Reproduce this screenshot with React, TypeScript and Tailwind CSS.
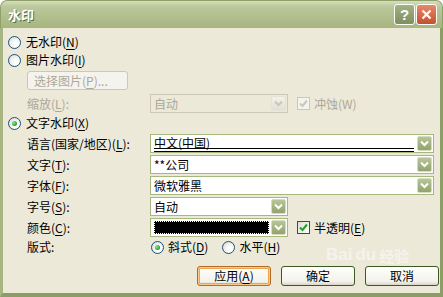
import React from "react";

const Radio = ({ checked }: { checked?: boolean }) => (
  <span className="w-[13px] h-[13px] rounded-full border border-[#1c5180] bg-[radial-gradient(circle_at_65%_65%,#ffffff_20%,#dcdcd4_90%)] flex items-center justify-center shrink-0">
    {checked && (
      <span className="w-[5px] h-[5px] rounded-full bg-[radial-gradient(circle_at_35%_35%,#8ee68e,#21a121_70%)]" />
    )}
  </span>
);

const Check = ({ disabled }: { disabled?: boolean }) => (
  <span
    className={
      "w-[13px] h-[13px] border flex items-center justify-center shrink-0 " +
      (disabled ? "border-[#cac8bb] bg-[#f4f3ee]" : "border-[#1c5180] bg-[linear-gradient(135deg,#dcdcd7,#ffffff)]")
    }
  >
    <svg width="9" height="9" viewBox="0 0 9 9">
      <path d="M1 4.5 L3.5 7 L8 1.5" stroke={disabled ? "#cac8bb" : "#21a121"} strokeWidth="2" fill="none" />
    </svg>
  </span>
);

const DropBtn = ({ disabled }: { disabled?: boolean }) => (
  <span
    className={
      "w-[15px] h-[15px] rounded-[2px] border flex items-center justify-center shrink-0 " +
      (disabled
        ? "border-[#e4e2d6] bg-[linear-gradient(#f3f2ea,#e2e0d4)]"
        : "border-[#d5dcc0] bg-[linear-gradient(#b8c595,#93a26e)]")
    }
  >
    <svg width="9" height="7" viewBox="0 0 9 7">
      <path d="M1 1.5 L4.5 5 L8 1.5" stroke={disabled ? "#c9c7ba" : "#ffffff"} strokeWidth="2" fill="none" />
    </svg>
  </span>
);

const Combo = ({
  children,
  w,
  disabled,
  extra,
}: {
  children?: React.ReactNode;
  w: string;
  disabled?: boolean;
  extra?: React.ReactNode;
}) => (
  <div
    className={
      "relative flex items-center h-[19px] border pl-[3px] pr-[1px] " +
      w +
      (disabled ? " border-[#cac8bb] bg-[#ece9d8] text-[#aca899]" : " border-[#a5b97f] bg-white text-black")
    }
  >
    <div className="flex-1 min-w-0 h-full flex items-center">{children}</div>
    <DropBtn disabled={disabled} />
    {extra}
  </div>
);

const U = ({ c }: { c: string }) => <span className="underline underline-offset-2">{c}</span>;

const Btn = ({ children, def }: { children: React.ReactNode; def?: boolean }) => (
  <button
    className={
      "w-[74px] h-[20px] rounded-[3px] border text-[12px] leading-none flex items-center justify-center bg-[linear-gradient(#fffffb,#f3f2ec_80%,#d8d4c6)] " +
      (def
        ? "border-[#b06a2a] shadow-[inset_0_0_0_1px_#f8c98a,inset_0_0_0_2px_#efa64c]"
        : "border-[#3a5a22]")
    }
  >
    <span>{children}</span>
  </button>
);

export default function App() {
  return (
    <div className="w-[443px] h-[297px] flex flex-col font-['Noto_Sans_CJK_SC','Noto_Sans',sans-serif] text-[12px] leading-none text-black bg-white">
      {/* title bar */}
      <div className="h-[28px] shrink-0 rounded-t-[7px] bg-[linear-gradient(#d6dfbd,#bcc89c_20%,#b1be8d_60%,#a7b582)] border border-b-0 border-[#8fa069] flex items-center pl-[7px] pr-[5px]">
        <span className="text-white font-bold text-[13px] [text-shadow:1px_1px_0_#5f6e40] flex-1">水印</span>
        <span className="w-[21px] h-[21px] rounded-[3px] border border-white bg-[linear-gradient(#a3b083,#7f8f5e)] flex items-center justify-center text-white font-bold text-[15px] font-['Liberation_Sans',sans-serif]">
          ?
        </span>
        <span className="ml-[1px] w-[21px] h-[21px] rounded-[3px] border border-white bg-[linear-gradient(#e8886a,#c4512c)] flex items-center justify-center">
          <svg width="11" height="11" viewBox="0 0 11 11">
            <path d="M1.5 1.5 L9.5 9.5 M9.5 1.5 L1.5 9.5" stroke="white" strokeWidth="2.2" />
          </svg>
        </span>
      </div>
      {/* body */}
      <div className="relative flex-1 flex flex-col bg-[#ece9d8] border-l-[3px] border-r-[3px] border-b-[4px] border-l-[#a7b583] border-r-[#8c9d66] border-b-[#8c9d66] pl-[5px] pt-[5px]">
        <div className="h-[18px] flex items-center gap-[5px]">
          <Radio />
          <span>
            无水印(<U c="N" />)
          </span>
        </div>
        <div className="h-[18px] flex items-center gap-[5px]">
          <Radio />
          <span>
            图片水印(<U c="I" />)
          </span>
        </div>
        <div className="mt-[2px] pl-[19px] flex">
          <span className="w-[101px] h-[19px] rounded-[3px] border border-[#cac8bb] bg-[#f4f3ee] text-[#aca899] flex items-center pl-[6px]">
            <span>
              选择图片(<U c="P" />)...
            </span>
          </span>
        </div>
        <div className="mt-[4px] h-[19px] flex items-center pl-[19px]">
          <span className="w-[123px] text-[#aca899]">
            缩放(<U c="L" />):
          </span>
          <Combo w="w-[138px]" disabled>
            自动
          </Combo>
          <span className="ml-[9px] flex items-center gap-[4px] text-[#aca899]">
            <Check disabled />
            <span>冲蚀(W)</span>
          </span>
        </div>
        <div className="mt-[1px] h-[18px] flex items-center gap-[5px]">
          <Radio checked />
          <span>
            文字水印(<U c="X" />)
          </span>
        </div>
        <div className="mt-[2px] h-[19px] flex items-center pl-[19px]">
          <span className="w-[123px]">
            语言(国家/地区)(<U c="L" />):
          </span>
          <Combo
            w="w-[284px]"
            extra={
              <span className="absolute left-[3px] right-[19px] bottom-[0px] h-[4px] border-t border-b border-black" />
            }
          >
            <span className="-mt-[2px]">中文(中国)</span>
          </Combo>
        </div>
        <div className="mt-[2px] h-[19px] flex items-center pl-[19px]">
          <span className="w-[123px]">
            文字(<U c="T" />):
          </span>
          <Combo w="w-[284px]">**公司</Combo>
        </div>
        <div className="mt-[2px] h-[19px] flex items-center pl-[19px]">
          <span className="w-[123px]">
            字体(<U c="F" />):
          </span>
          <Combo w="w-[284px]">微软雅黑</Combo>
        </div>
        <div className="mt-[2px] h-[19px] flex items-center pl-[19px]">
          <span className="w-[123px]">
            字号(<U c="S" />):
          </span>
          <Combo w="w-[138px]">自动</Combo>
        </div>
        <div className="mt-[2px] h-[19px] flex items-center pl-[19px]">
          <span className="w-[123px]">
            颜色(<U c="C" />):
          </span>
          <Combo w="w-[138px]">
            <span className="block w-full h-[13px] mr-[2px] bg-black outline outline-1 outline-dotted outline-white -outline-offset-1" />
          </Combo>
          <span className="ml-[9px] flex items-center gap-[4px]">
            <Check />
            <span>
              半透明(<U c="E" />)
            </span>
          </span>
        </div>
        <div className="mt-[1px] h-[18px] flex items-center pl-[19px]">
          <span className="w-[124px]">版式:</span>
          <span className="flex items-center gap-[4px]">
            <Radio checked />
            <span>
              斜式(<U c="D" />)
            </span>
          </span>
          <span className="ml-[14px] flex items-center gap-[4px]">
            <Radio />
            <span>
              水平(<U c="H" />)
            </span>
          </span>
        </div>
        <div className="mt-[10px] flex justify-end gap-[10px] pr-[1px]">
          <Btn def>
            应用(<U c="A" />)
          </Btn>
          <Btn>确定</Btn>
          <Btn>取消</Btn>
        </div>
        <div className="absolute left-[323px] top-[218px] flex items-end text-white/50 font-bold text-[17px] leading-none font-['Liberation_Sans',sans-serif] pointer-events-none">
          <span>Bai</span>
          <span className="ml-[3px]">du</span>
          <span className="ml-[3px] text-[15px] font-['Noto_Sans_CJK_SC',sans-serif]">经验</span>
        </div>
      </div>
    </div>
  );
}
